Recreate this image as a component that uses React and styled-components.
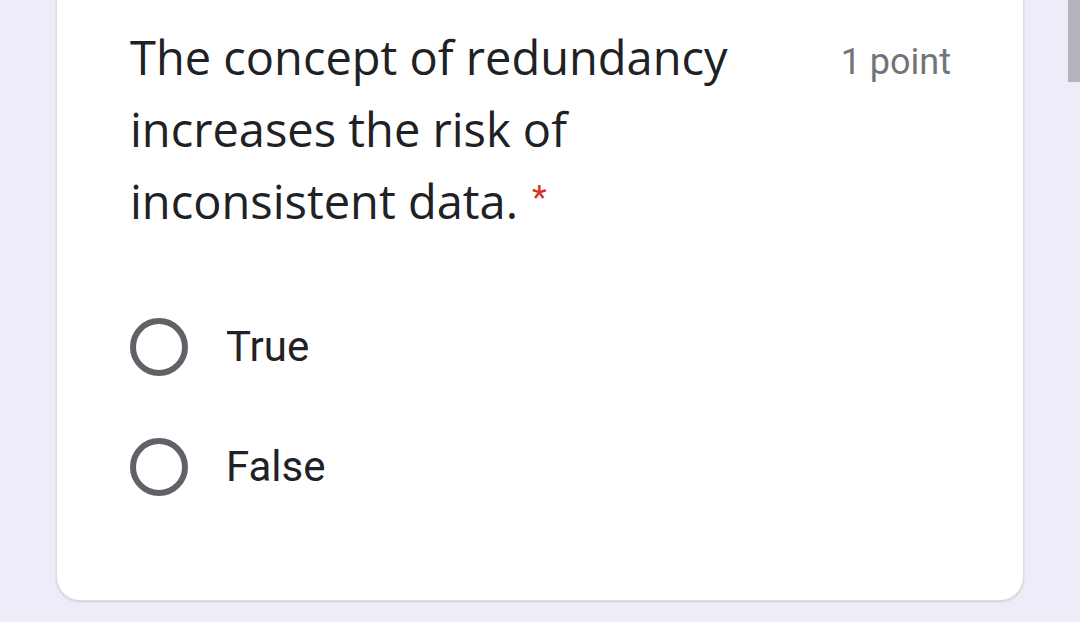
import React from "react";
import styled, { createGlobalStyle } from "styled-components";

const Global = createGlobalStyle`
  html, body { margin: 0; padding: 0; }
  body {
    background: #efebf8;
    width: 1080px;
    height: 622px;
    overflow: hidden;
  }
`;

const Page = styled.div`
  position: relative;
  width: 1080px;
  height: 622px;
  padding: 0 56px;
  box-sizing: border-box;
`;

const Card = styled.div`
  background: #fff;
  border: 1px solid #dadce0;
  border-top: none;
  border-radius: 0 0 24px 24px;
  box-shadow: 0 1px 2px rgba(60, 64, 67, 0.18);
  padding: 32px 72px 104px 73px;
  box-sizing: border-box;
`;

const Header = styled.div`
  display: flex;
  justify-content: space-between;
  align-items: flex-start;
`;

const Title = styled.div`
  font-family: "Open Sans", sans-serif;
  font-size: 47px;
  line-height: 72px;
  color: #202124;
  width: 640px;
  margin-top: -11px;
`;

const Required = styled.span`
  color: #d93025;
  font-family: "Roboto", sans-serif;
  font-size: 34px;
  line-height: 0;
  margin-left: 14px;
  vertical-align: 10px;
`;

const Points = styled.div`
  font-family: "Roboto", sans-serif;
  font-size: 36px;
  color: #70757a;
  line-height: 48px;
  margin-top: 6px;
`;

const Options = styled.div`
  display: flex;
  flex-direction: column;
  gap: 62px;
  margin-top: 81px;
`;

const Option = styled.label`
  display: flex;
  align-items: center;
  gap: 38px;
`;

const Radio = styled.span`
  width: 58px;
  height: 58px;
  box-sizing: border-box;
  border: 6px solid #5f6368;
  border-radius: 50%;
  flex: none;
`;

const OptionText = styled.span`
  font-family: "Roboto", sans-serif;
  font-size: 42px;
  color: #202124;
  line-height: 58px;
`;

const Scrollbar = styled.div`
  position: absolute;
  top: 0;
  right: 0;
  width: 12px;
  height: 82px;
  background: #b7b3bc;
`;

export default function App() {
  return (
    <Page>
      <Global />
      <Card>
        <Header>
          <Title>
            The concept of redundancy increases the risk of inconsistent data.
            <Required>*</Required>
          </Title>
          <Points>1 point</Points>
        </Header>
        <Options>
          <Option>
            <Radio />
            <OptionText>True</OptionText>
          </Option>
          <Option>
            <Radio />
            <OptionText>False</OptionText>
          </Option>
        </Options>
      </Card>
      <Scrollbar />
    </Page>
  );
}
